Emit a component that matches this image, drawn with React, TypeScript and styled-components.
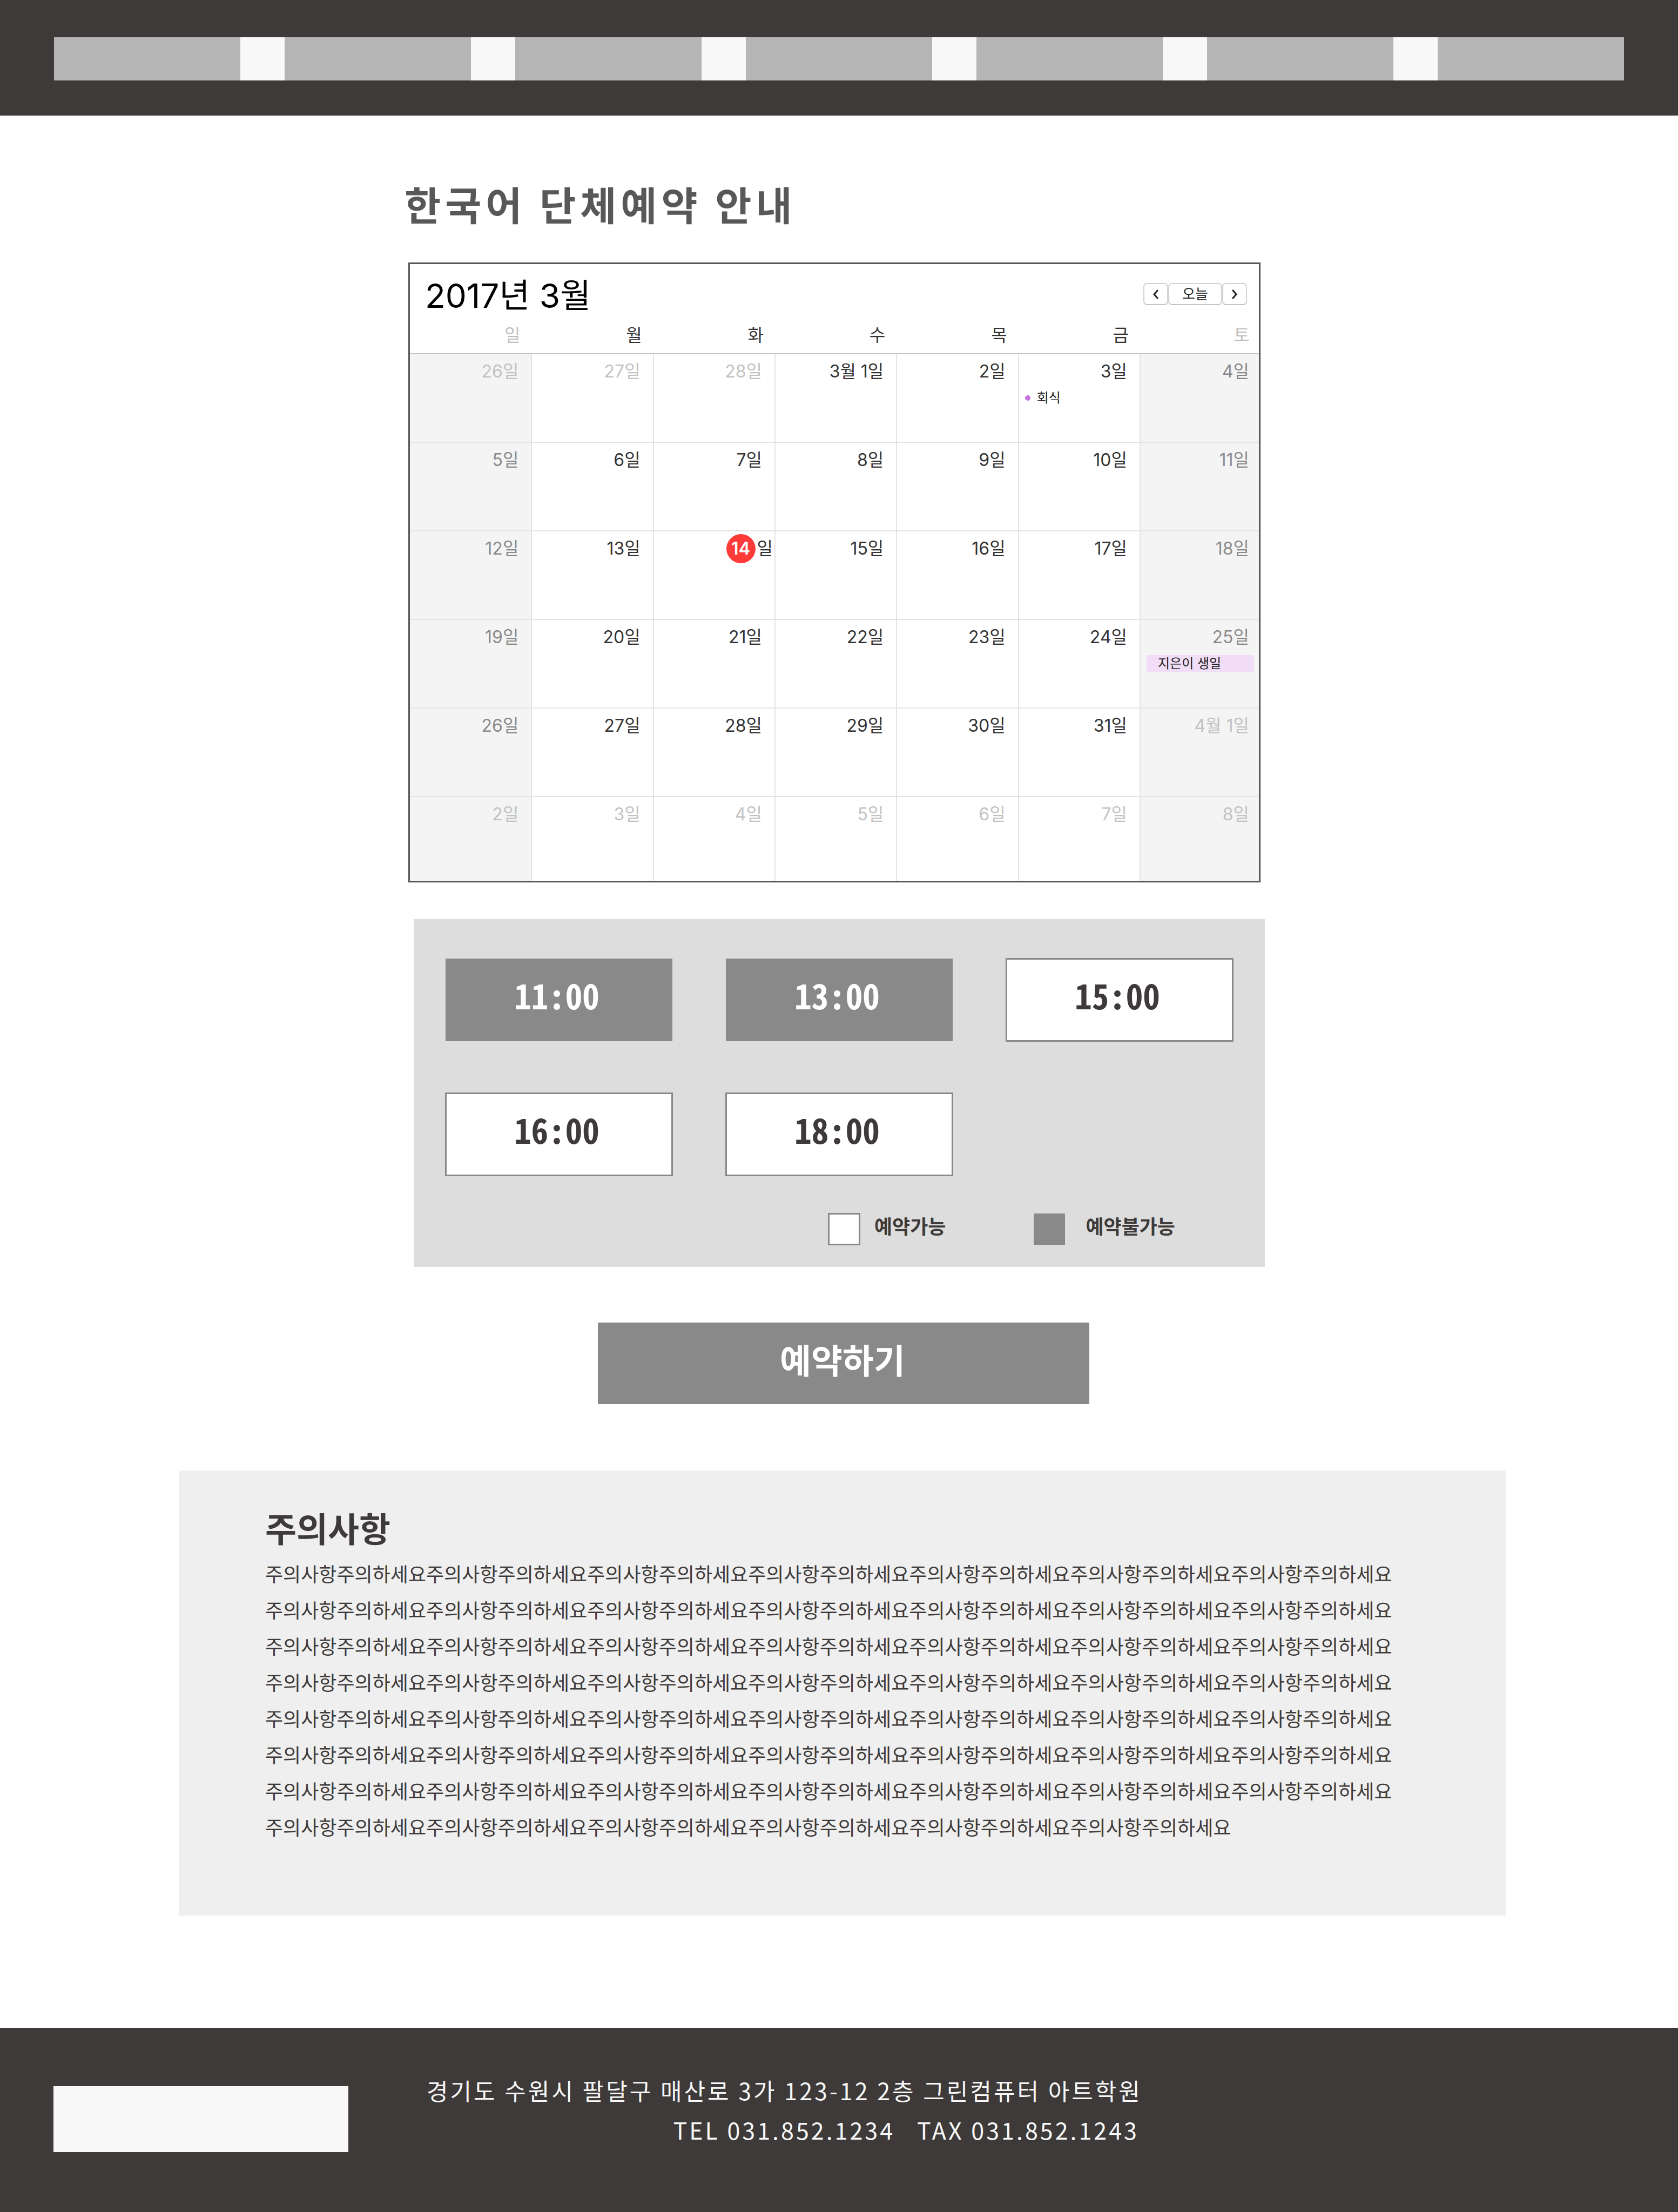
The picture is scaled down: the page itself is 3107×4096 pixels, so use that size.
import React from "react";
import styled, { createGlobalStyle, css } from "styled-components";

const sans = `"Noto Sans CJK KR", "Noto Sans", sans-serif`;
const calendarSans = `Inter, "Noto Sans CJK KR", sans-serif`;
const mono = `"Noto Sans Mono CJK KR", "Noto Sans CJK KR", monospace`;

const color = {
  dark: "#3e3a39",
  title: "#595757",
  grey: "#898989",
  bar: "#b5b5b5",
  light: "#f8f8f8",
  panel: "#dddddd",
  notice: "#efefef",
  line: "#e4e4e4",
};

const GlobalStyle = createGlobalStyle`
  *, *::before, *::after { box-sizing: border-box; }
  body { margin: 0; background: #fff; color: ${color.dark}; font-family: ${sans}; }
  h1, h2, p { margin: 0; }
  button { margin: 0; padding: 0; font: inherit; cursor: pointer; }
`;

const Header = styled.header`
  padding: 69px 100px 65px;
  background: ${color.dark};
`;

const MenuBar = styled.nav`
  display: grid;
  grid-template-columns: repeat(7, 1fr);
  gap: 82px;
  height: 80px;
  background: ${color.light};
`;

const MenuLink = styled.a`
  background: ${color.bar};
`;

const Main = styled.main`
  padding: 122px 0 208px;
`;

const Booking = styled.div`
  display: flex;
  flex-direction: column;
  max-width: 1609px;
  margin: 0 auto;
  padding-right: 16px;
`;

const PageTitle = styled.h1`
  margin-bottom: 70px;
  color: ${color.title};
  font-size: 73px;
  line-height: 80px;
  letter-spacing: 8px;
`;

const Calendar = styled.section`
  margin: 0 8px 68px 7px;
  border: 3px solid ${color.title};
  background: #fff;
  font-family: ${calendarSans};
`;

const CalendarHead = styled.div`
  display: flex;
  justify-content: space-between;
  align-items: flex-start;
  height: 100px;
  padding: 35px 22px 0 28px;
`;

const Month = styled.h2`
  color: #000;
  font-size: 62px;
  font-weight: 400;
  line-height: 48px;
`;

const Pager = styled.div`
  display: flex;
`;

const PagerButton = styled.button<{ $wide?: boolean }>`
  display: flex;
  align-items: center;
  justify-content: center;
  width: ${(p) => (p.$wide ? 100 : 46)}px;
  height: 41px;
  border: 2px solid #d2d2d2;
  border-bottom-color: #c4c4c4;
  border-radius: 7px;
  background: #fff;
  color: #222;
  font-size: 26px;
  line-height: 34px;
`;

const Days = styled.table`
  width: 100%;
  table-layout: fixed;
  border-collapse: collapse;
`;

const Weekday = styled.th<{ $weekend: boolean }>`
  height: 66px;
  padding: 0 21px 2px 0;
  border-bottom: 2px solid #c6c5ca;
  color: ${(p) => (p.$weekend ? "#bfbfbf" : "#333")};
  font-size: 32px;
  font-weight: 400;
  line-height: 54px;
  text-align: right;

  &:last-child {
    width: 220px;
    padding-right: 17px;
  }
`;

const Week = styled.tr`
  height: 164px;

  &:last-child {
    height: 156px;
  }
`;

type Tone = "normal" | "weekend" | "outside";

const toneColor: Record<Tone, string> = {
  normal: "#333",
  weekend: "#8a8a8a",
  outside: "#c2c2c2",
};

const Day = styled.td<{ $shaded: boolean }>`
  padding: 0;
  border: 2px solid ${color.line};
  border-width: 2px 2px 0 0;
  background: ${(p) => (p.$shaded ? "#f4f4f4" : "#fff")};
  vertical-align: top;

  ${Week}:first-child & {
    border-top-color: #c6c5ca;
  }

  &:last-child {
    border-right: 0;
  }
`;

const DateLabel = styled.div<{ $tone: Tone; $today?: boolean }>`
  display: flex;
  justify-content: flex-end;
  gap: 3px;
  height: 59px;
  padding: 5px ${(p) => (p.$today ? 3 : 23)}px 0 0;
  color: ${(p) => toneColor[p.$tone]};
  font-size: 32px;
  line-height: 54px;

  ${Day}:last-child & {
    padding-right: 18px;
  }
`;

const TodayMark = styled.span`
  width: 54px;
  height: 54px;
  border-radius: 50%;
  background: #ff3b39;
  color: #fff;
  font-weight: 600;
  text-align: center;
`;

const Event = styled.div<{ $allDay?: boolean }>`
  display: flex;
  align-items: center;
  gap: 12px;
  height: 32px;
  margin: 6px 9px 0 11px;
  color: #222;
  font-size: 24px;
  line-height: 32px;
  ${(p) =>
    p.$allDay &&
    css`
      padding-left: 21px;
      background: #f1ddf6;
    `}
`;

const EventDot = styled.span`
  width: 10px;
  height: 10px;
  border-radius: 50%;
  background: #c774de;
`;

const SlotPanel = styled.section`
  margin: 0 0 103px 17px;
  padding: 72px 58px 40px;
  background: ${color.panel};
`;

const SlotGrid = styled.div`
  display: grid;
  grid-template-columns: repeat(3, 1fr);
  gap: 94px 97px;
`;

const openBox = css`
  border: 3px solid ${color.grey};
  background: #fff;
`;

const closedBox = css`
  border: 1px solid transparent;
  background: ${color.grey};
  background-clip: padding-box;
`;

const SlotButton = styled.button`
  height: 155px;
  padding: 0 8px 20px 0;
  ${openBox}
  color: ${color.dark};
  font-family: ${mono};
  font-size: 63px;
  font-weight: 700;
  line-height: 80px;

  &:disabled {
    ${closedBox}
    color: #fff;
    cursor: default;
  }
`;

const Legend = styled.div`
  display: flex;
  justify-content: flex-end;
  gap: 162px;
  margin-top: 68px;
  padding-right: 108px;
`;

const LegendItem = styled.div<{ $closed?: boolean }>`
  display: flex;
  gap: ${(p) => (p.$closed ? 37 : 26)}px;
  font-size: 36px;
  font-weight: 700;
  line-height: 46px;
`;

const LegendBox = styled.span<{ $closed?: boolean }>`
  width: 60px;
  height: 60px;
  ${(p) => (p.$closed ? closedBox : openBox)}
`;

const SubmitButton = styled.button`
  width: 910px;
  height: 151px;
  margin: 0 0 123px 358px;
  padding: 0 4px 18px 0;
  border: 0;
  background: ${color.grey};
  color: #fff;
  font-size: 63px;
  font-weight: 700;
`;

const Notice = styled.section`
  margin: 0 319px 0 331px;
  padding: 65px 184px 131px 160px;
  background: ${color.notice};
`;

const NoticeTitle = styled.h2`
  margin-bottom: 12px;
  font-size: 63px;
  line-height: 80px;
`;

const NoticeText = styled.p`
  font-size: 36px;
  line-height: 67px;
  word-break: break-all;
`;

const Footer = styled.footer`
  display: flex;
  align-items: flex-start;
  gap: 145px;
  padding: 79px 100px 111px 99px;
  background: ${color.dark};
`;

const FooterLogo = styled.div`
  width: 546px;
  height: 122px;
  margin-top: 29px;
  background: ${color.light};
`;

const Address = styled.address`
  color: ${color.light};
  font-size: 43px;
  font-style: normal;
  line-height: 73px;
  letter-spacing: 4px;
  text-align: right;
`;

const Phones = styled.p`
  padding-right: 6px;
  white-space: pre;
`;

const weekdays = ["일", "월", "화", "수", "목", "금", "토"];

const weeks = [
  ["26일", "27일", "28일", "3월 1일", "2일", "3일", "4일"],
  ["5일", "6일", "7일", "8일", "9일", "10일", "11일"],
  ["12일", "13일", "14일", "15일", "16일", "17일", "18일"],
  ["19일", "20일", "21일", "22일", "23일", "24일", "25일"],
  ["26일", "27일", "28일", "29일", "30일", "31일", "4월 1일"],
  ["2일", "3일", "4일", "5일", "6일", "7일", "8일"],
];

const slots = [
  { time: "11:00", open: false },
  { time: "13:00", open: false },
  { time: "15:00", open: true },
  { time: "16:00", open: true },
  { time: "18:00", open: true },
];

const noticeText = "주의사항주의하세요".repeat(55);

const isWeekend = (day: number) => day === 0 || day === 6;

// The month runs from the fourth cell of the first week to the sixth of the fifth.
function toneOf(week: number, day: number): Tone {
  const index = week * 7 + day;
  if (index < 3 || index > 33) return "outside";
  return isWeekend(day) ? "weekend" : "normal";
}

function Chevron({ d }: { d: string }) {
  return (
    <svg width="14" height="20" viewBox="0 0 14 20" fill="none" stroke="#222" strokeWidth="3" aria-hidden="true">
      <path d={d} />
    </svg>
  );
}

function DayCell({ label, week, day }: { label: string; week: number; day: number }) {
  const today = week === 2 && day === 2;
  return (
    <Day $shaded={isWeekend(day)}>
      <DateLabel $tone={toneOf(week, day)} $today={today}>
        {today ? (
          <>
            <TodayMark>14</TodayMark>
            <span>일</span>
          </>
        ) : (
          label
        )}
      </DateLabel>
      {week === 0 && day === 5 && (
        <Event>
          <EventDot />
          회식
        </Event>
      )}
      {week === 3 && day === 6 && <Event $allDay>지은이 생일</Event>}
    </Day>
  );
}

export default function App() {
  return (
    <>
      <GlobalStyle />
      <Header>
        <MenuBar>
          {weekdays.map((_, i) => (
            <MenuLink key={i} href="#" aria-label={`메뉴 ${i + 1}`} />
          ))}
        </MenuBar>
      </Header>
      <Main>
        <Booking>
          <PageTitle>한국어 단체예약 안내</PageTitle>
          <Calendar>
            <CalendarHead>
              <Month>2017년 3월</Month>
              <Pager>
                <PagerButton type="button" aria-label="이전 달">
                  <Chevron d="M11 2 L4 10 L11 18" />
                </PagerButton>
                <PagerButton type="button" $wide>
                  오늘
                </PagerButton>
                <PagerButton type="button" aria-label="다음 달">
                  <Chevron d="M3 2 L10 10 L3 18" />
                </PagerButton>
              </Pager>
            </CalendarHead>
            <Days>
              <thead>
                <tr>
                  {weekdays.map((name, i) => (
                    <Weekday key={name} scope="col" $weekend={isWeekend(i)}>
                      {name}
                    </Weekday>
                  ))}
                </tr>
              </thead>
              <tbody>
                {weeks.map((days, week) => (
                  <Week key={week}>
                    {days.map((label, day) => (
                      <DayCell key={day} label={label} week={week} day={day} />
                    ))}
                  </Week>
                ))}
              </tbody>
            </Days>
          </Calendar>
          <SlotPanel>
            <SlotGrid>
              {slots.map((slot) => (
                <SlotButton key={slot.time} type="button" disabled={!slot.open}>
                  {slot.time}
                </SlotButton>
              ))}
            </SlotGrid>
            <Legend>
              <LegendItem>
                <LegendBox />
                예약가능
              </LegendItem>
              <LegendItem $closed>
                <LegendBox $closed />
                예약불가능
              </LegendItem>
            </Legend>
          </SlotPanel>
          <SubmitButton type="submit">예약하기</SubmitButton>
        </Booking>
        <Notice>
          <NoticeTitle>주의사항</NoticeTitle>
          <NoticeText>{noticeText}</NoticeText>
        </Notice>
      </Main>
      <Footer>
        <FooterLogo />
        <Address>
          <p>경기도 수원시 팔달구 매산로 3가 123-12 2층 그린컴퓨터 아트학원</p>
          <Phones>{"TEL 031.852.1234   TAX 031.852.1243"}</Phones>
        </Address>
      </Footer>
    </>
  );
}
